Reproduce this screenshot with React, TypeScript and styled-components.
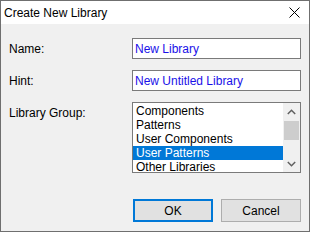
import styled, { createGlobalStyle } from "styled-components";

const GlobalStyle = createGlobalStyle`
    html, body {
        margin: 0;
        padding: 0;
        background: #f0f0f0;
    }
    body {
        font-family: "Liberation Sans", Arial, sans-serif;
        font-size: 12px;
        color: #000;
    }
`;

const Window = styled.div`
    width: 310px;
    height: 232px;
    box-sizing: border-box;
    border: 1px solid #6f6f6f;
    background: #f0f0f0;
    display: flex;
    flex-direction: column;
    overflow: hidden;
`;

const TitleBar = styled.div`
    height: 23px;
    flex: none;
    background: #ffffff;
    display: flex;
    align-items: center;
    justify-content: space-between;
    padding-left: 3px;
`;

const Title = styled.span`
    font-size: 12px;
    line-height: 1;
    margin-top: 1px;
`;

const CloseButton = styled.div`
    width: 30px;
    height: 23px;
    display: flex;
    align-items: center;
    justify-content: center;
`;

const Body = styled.div`
    flex: 1;
    padding: 14px 8px 0 8px;
    display: flex;
    flex-direction: column;
`;

const FormGrid = styled.div`
    display: grid;
    grid-template-columns: 123px 1fr;
    row-gap: 11px;
`;

const Label = styled.label`
    padding-top: 4px;
    line-height: 14px;
`;

const TextBox = styled.div`
    height: 21px;
    box-sizing: border-box;
    border: 1px solid #7a7a7a;
    background: #ffffff;
    color: #1a10e8;
    padding-left: 2px;
    display: flex;
    align-items: center;
    line-height: 1;
`;

const ListBox = styled.div`
    height: 71px;
    box-sizing: border-box;
    border: 1px solid #7a7a7a;
    background: #ffffff;
    display: flex;
    overflow: hidden;
`;

const Items = styled.div`
    flex: 1;
    padding-top: 1px;
    overflow: hidden;
`;

const Item = styled.div<{ $selected?: boolean }>`
    height: 14px;
    line-height: 14px;
    padding-left: 3px;
    white-space: nowrap;
    background: ${(p) => (p.$selected ? "#0078d7" : "transparent")};
    color: ${(p) => (p.$selected ? "#ffffff" : "#000000")};
`;

const ScrollBar = styled.div`
    width: 17px;
    flex: none;
    background: #f0f0f0;
    display: flex;
    flex-direction: column;
`;

const Arrow = styled.div`
    height: 17px;
    flex: none;
    display: flex;
    align-items: center;
    justify-content: center;
`;

const Track = styled.div`
    flex: 1;
    padding: 1px 1px 0 1px;
`;

const Thumb = styled.div`
    height: 19px;
    background: #cdcdcd;
`;

const ButtonRow = styled.div`
    display: flex;
    justify-content: flex-end;
    gap: 8px;
    margin-top: 26px;
`;

const Button = styled.div<{ $default?: boolean }>`
    width: 80px;
    height: 23px;
    box-sizing: border-box;
    background: #e1e1e1;
    border: ${(p) => (p.$default ? "2px solid #0078d7" : "1px solid #adadad")};
    display: flex;
    align-items: center;
    justify-content: center;
    line-height: 1;
`;

const libraries = ["Components", "Patterns", "User Components", "User Patterns", "Other Libraries"];

export default function App() {
    return (
        <>
            <GlobalStyle />
            <Window>
                <TitleBar>
                    <Title>Create New Library</Title>
                    <CloseButton>
                        <svg width="11" height="11" viewBox="0 0 11 11">
                            <path d="M0.5 0.5 L10.5 10.5 M10.5 0.5 L0.5 10.5" stroke="#000" strokeWidth="1" />
                        </svg>
                    </CloseButton>
                </TitleBar>
                <Body>
                    <FormGrid>
                        <Label>Name:</Label>
                        <TextBox>New Library</TextBox>
                        <Label>Hint:</Label>
                        <TextBox>New Untitled Library</TextBox>
                        <Label>Library Group:</Label>
                        <ListBox>
                            <Items>
                                {libraries.map((name) => (
                                    <Item key={name} $selected={name === "User Patterns"}>
                                        {name}
                                    </Item>
                                ))}
                            </Items>
                            <ScrollBar>
                                <Arrow>
                                    <svg width="9" height="6" viewBox="0 0 9 6">
                                        <path d="M0.8 5 L4.5 1.3 L8.2 5" fill="none" stroke="#606060" strokeWidth="1.5" />
                                    </svg>
                                </Arrow>
                                <Track>
                                    <Thumb />
                                </Track>
                                <Arrow>
                                    <svg width="9" height="6" viewBox="0 0 9 6">
                                        <path d="M0.8 1 L4.5 4.7 L8.2 1" fill="none" stroke="#606060" strokeWidth="1.5" />
                                    </svg>
                                </Arrow>
                            </ScrollBar>
                        </ListBox>
                    </FormGrid>
                    <ButtonRow>
                        <Button $default>OK</Button>
                        <Button>Cancel</Button>
                    </ButtonRow>
                </Body>
            </Window>
        </>
    );
}
